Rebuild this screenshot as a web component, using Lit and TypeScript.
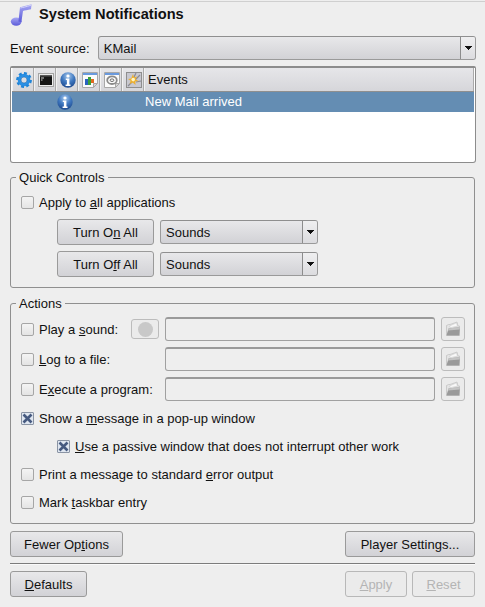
import { LitElement, html, css, svg } from "lit";
import { customElement } from "lit/decorators.js";

const arrow = html`<svg class="arrow" width="7" height="4" viewBox="0 0 7 4"><path d="M0 0h7v1h-1v1h-1v1h-1v1h-1v-1h-1v-1h-1v-1h-1z" fill="#111"/></svg>`;

const infoIcon = (s: number) => html`<svg width=${s} height=${s} viewBox="0 0 16 16">
  <defs><radialGradient id="ig" cx="50%" cy="25%" r="80%"><stop offset="0" stop-color="#a8c8ec"/><stop offset=".5" stop-color="#3f78c0"/><stop offset="1" stop-color="#1a4488"/></radialGradient></defs>
  <circle cx="8" cy="8" r="7.7" fill="url(#ig)"/>
  <circle cx="8" cy="4" r="1.6" fill="#fff"/>
  <path d="M5.8 6.6h3.6v6h1.1V14H5.6v-1.4h1.3V8H5.8z" fill="#fff"/>
</svg>`;

const gear = html`<svg width="16" height="16" viewBox="0 0 16 16">
  <circle cx="8" cy="8" r="4.6" fill="none" stroke="#2a8fe4" stroke-width="3.4"/>
  <circle cx="8" cy="8" r="6.8" fill="none" stroke="#1f84d8" stroke-width="2.2" stroke-dasharray="3 2.3"/>
  <circle cx="8" cy="8" r="3" fill="#dcdde2" stroke="#1468b4" stroke-width=".6"/>
</svg>`;

const terminal = html`<svg width="16" height="16" viewBox="0 0 16 16">
  <rect x=".5" y="1.5" width="15" height="13" fill="#ececec" stroke="#a4a4a4"/>
  <rect x="2" y="3" width="12" height="10" fill="#151515"/>
  <rect x="2" y="3" width="12" height="1.5" fill="#5a5a5a"/>
  <path d="M3 6h3M3 8h1.5" stroke="#d0d0d0" stroke-width="1"/>
</svg>`;

const docBase = svg`
  <path d="M.5.5h15v11l-4 4H.5z" fill="#fbfbfb" stroke="#a8a8a8"/>
  <rect x="1" y="1" width="14" height="2" fill="#6a9ade"/>
  <path d="M11.5 15.5v-4h4z" fill="#d4d4d4" stroke="#a8a8a8"/>`;

const chartDoc = html`<svg width="16" height="16" viewBox="0 0 16 16">
  ${docBase}
  <rect x="3" y="7" width="3" height="6" fill="#2a62c0"/>
  <rect x="6" y="5" width="3" height="8" fill="#3aa03a"/>
  <rect x="9" y="7" width="3" height="4" fill="#e06a20"/>
</svg>`;

const discDoc = html`<svg width="16" height="16" viewBox="0 0 16 16">
  ${docBase}
  <ellipse cx="8" cy="8.2" rx="4.8" ry="3.8" fill="none" stroke="#8a8a8a" stroke-width="1.8"/>
  <ellipse cx="8" cy="8.2" rx="1.9" ry="1.3" fill="none" stroke="#6e6e6e" stroke-width="1"/>
</svg>`;

const spark = html`<svg width="16" height="16" viewBox="0 0 16 16">
  <rect x=".5" y=".5" width="15" height="15" fill="#c8c8d0" stroke="#8e8e8e"/>
  <path d="M10 1l-3 6M14 3L9 8M15 9l-5 1M2 14l5-5" stroke="#8a8a94" stroke-width="1.2"/>
  <path d="M7 2l1 3.4 3-1-1.4 3 3 1.6-3.4.6.4 3.4-3-2.4-3 1.4 1-3.2-2.6-1.8 3.2-.4z" fill="#eeb02e"/>
  <circle cx="7.2" cy="7.6" r="1.8" fill="#fff6c4"/>
</svg>`;

const note = html`<svg width="22" height="23" viewBox="0 0 22 23">
  <defs><linearGradient id="ng" x1="0" y1="0" x2="0" y2="1"><stop offset="0" stop-color="#a8a8f4"/><stop offset="1" stop-color="#5a5ad8"/></linearGradient></defs>
  <ellipse cx="6.2" cy="17.6" rx="5.4" ry="4.2" fill="url(#ng)"/>
  <path d="M8.4 17.5L10 3.2c2.6-.6 6.2-1.4 11.6-3L21 5.2c-3.6.6-6.4 1.2-8 1.7L11.4 18z" fill="url(#ng)"/>
  <path d="M10.4 4c2.6-.6 6-1.3 10.6-2.8" stroke="#d4d4fa" fill="none"/>
</svg>`;

const folder = html`<svg width="16" height="16" viewBox="0 0 16 16">
  <path d="M1.5 14.5V4.5l2-1h1.5l7-2.5 1 4h1.5v9.5z" fill="#e4e4e4" stroke="#b8b8b8" stroke-width=".6"/>
  <path d="M4.5 5l7-3.2 1 3.4-7 1.4z" fill="#f8f8f8" stroke="#c4c4c4" stroke-width=".5"/>
  <path d="M1.5 14.5l2-7 11.5-1.5-.8 8.5z" fill="#9a9a9a"/>
  <path d="M3.5 7.5L15 6l-.3 2.4-11.8 1.2z" fill="#c4c4c4"/>
</svg>`;

@customElement("app-root")
export class AppRoot extends LitElement {
  static styles = css`
    :host {
      display: block;
      width: 485px;
      height: 607px;
      overflow: hidden;
      background: #eeeeee;
      color: #111;
      font-family: "Liberation Sans", Arial, sans-serif;
      font-size: 13px;
      letter-spacing: 0.02px;
      box-sizing: border-box;
    }
    * { box-sizing: border-box; }
    u { text-underline-offset: 1px; }
    .page { display: flex; flex-direction: column; padding: 1px 10px 0; }
    .topline { height: 1px; background: #cfcfcf; margin: 0 -10px; }
    .title { display: flex; align-items: center; gap: 7px; height: 24px; margin-top: 1px; font-size: 14.6px; font-weight: bold; }
    .title span { margin-top: -3px; }
    .source { display: flex; align-items: center; margin-top: 9px; gap: 8px; }
    .source .combo { flex: 1; margin-right: -1px; height: 24px; }
    .combo {
      display: flex; align-items: stretch;
      border: 1px solid #9a9a9a; border-top-color: #8f8f8f; border-radius: 3px;
      background: linear-gradient(#e8e8ea, #d2d2d6);
    }
    .combo .val { flex: 1; padding-left: 5px; display: flex; align-items: center; }
    .combo .drop { width: 15px; border-left: 1px solid #8c8c8c; display: flex; align-items: center; justify-content: center; background: linear-gradient(#efeff0, #dcdcdf); border-radius: 0 2px 2px 0; }
    .tree {
      margin-top: 6px; height: 97px; width: 466px;
      border: 1px solid #8c8c8c; border-top: 2px solid #8c8c8c; border-radius: 2px 2px 3px 3px;
      background: #fff; padding: 0 1px;
    }
    .thead { display: flex; height: 24px; background: linear-gradient(#e6e6e9, #d6d6da); border-bottom: 1px solid #8f8f8f; }
    .th { width: 22px; border-right: 1px solid #aaa; border-left: 1px solid #f2f2f2; padding-left: 1px; display: flex; align-items: center; justify-content: center; }
    .th.ev { flex: 1; justify-content: flex-start; padding-left: 3px; }
    .trow { display: flex; align-items: center; height: 20px; background: #648db3; color: #fff; }
    .trow .ic { width: 16px; height: 16px; margin-left: 45px; }
    .trow .name { margin-left: 72px; margin-top: -1px; }
    fieldset {
      margin: 0; min-width: 0; border: 1px solid #8f8f8f; border-radius: 3px;
      padding: 0 9px 0 10px;
    }
    legend { margin-left: -5px; padding: 0 3px; line-height: 15px; }
    .quick { margin-top: 7px; height: 118px; width: 465px; }
    .chk { display: flex; align-items: center; gap: 5px; }
    .box {
      width: 13px; height: 13px; flex: none; border: 1px solid #a6a6a6; border-radius: 2px;
      background: linear-gradient(#f4f4f4, #e4e4e4); display: flex; align-items: center; justify-content: center;
    }
    .box.on { border-radius: 1px; background: #dfe6f0; border-color: #8a94a4; }
    .quick .all { height: 19px; margin-top: 8px; }
    .turn { display: flex; align-items: center; gap: 6px; margin-left: 36px; height: 26px; margin-top: 6px; }
    .turn.first { margin-top: 7px; }
    .turn .combo { width: 158px; height: 24px; }
    button {
      font: inherit; letter-spacing: inherit; color: inherit; height: 26px; padding: 0;
      border: 1px solid #9a9a9a; border-radius: 3px;
      background: linear-gradient(#e8e8ea, #d2d2d6);
    }
    .turn button { width: 97px; }
    .actions { margin-top: 8px; height: 228px; width: 465px; }
    .rows { display: flex; flex-direction: column; }
    .r { display: flex; align-items: center; height: 24px; }
    .r + .r { margin-top: 6px; }
    .r .chk { width: 144px; flex: none; }
    .r.first { margin-top: 6px; }
    .tone { width: 28px; height: 20px; margin-left: -34px; margin-right: 6px; border: 1px solid #bcbcbc; border-radius: 3px; background: #ebebeb; display: flex; align-items: center; justify-content: center; }
    .tone i { display: block; width: 15px; height: 15px; border-radius: 50%; background: #c8c8c8; }
    .field { width: 270px; height: 24px; border: 1px solid #a0a0a0; border-top: 2px solid #9a9a9a; border-radius: 3px; background: #eeeeee; }
    .pick { width: 24px; height: 24px; margin-left: 6px; border: 1px solid #bcbcbc; border-radius: 3px; background: #ebebeb; display: flex; align-items: center; justify-content: center; }
    .opt { height: 28px; display: flex; align-items: center; }
    .opts { margin-top: 3px; }
    .indent { margin-left: 36px; }
    .line1 { display: flex; justify-content: space-between; margin-top: 7px; }
    .line1 button:first-child { width: 113px; }
    .line1 button:last-child { width: 130px; }
    .sep { height: 1px; background: #7c7c7c; margin-top: 6px; width: 465px; box-shadow: 0 1px 0 #fafafa; }
    .line2 { display: flex; margin-top: 7px; width: 465px; }
    .line2 .def { width: 77px; }
    .line2 .dis { color: #b4b4b4; border-color: #b8b8b8; background: #ebebeb; }
    .line2 .apply { width: 62px; margin-left: auto; }
    .line2 .reset { width: 63px; margin-left: 5px; }
  `;

  private xmark = svg`<svg width="11" height="11" viewBox="0 0 11 11"><path d="M1.5 1.5l8 8M9.5 1.5l-8 8" stroke="#465a80" stroke-width="2.6"/></svg>`;

  private box(on = false) {
    return html`<span class="box ${on ? "on" : ""}">${on ? this.xmark : ""}</span>`;
  }

  render() {
    return html`
      <div class="page">
        <div class="topline"></div>
        <div class="title">${note}<span>System Notifications</span></div>
        <div class="source">
          <span>Event source:</span>
          <div class="combo"><span class="val">KMail</span><span class="drop">${arrow}</span></div>
        </div>
        <div class="tree">
          <div class="thead">
            <div class="th">${gear}</div>
            <div class="th">${terminal}</div>
            <div class="th">${infoIcon(16)}</div>
            <div class="th">${chartDoc}</div>
            <div class="th">${discDoc}</div>
            <div class="th">${spark}</div>
            <div class="th ev">Events</div>
          </div>
          <div class="trow"><span class="ic">${infoIcon(16)}</span><span class="name">New Mail arrived</span></div>
        </div>
        <fieldset class="quick">
          <legend>Quick Controls</legend>
          <div class="chk all">${this.box()}<span>Apply to <u>a</u>ll applications</span></div>
          <div class="turn first"><button>Turn O<u>n</u> All</button>
            <div class="combo"><span class="val">Sounds</span><span class="drop">${arrow}</span></div></div>
          <div class="turn"><button>Turn O<u>f</u>f All</button>
            <div class="combo"><span class="val">Sounds</span><span class="drop">${arrow}</span></div></div>
        </fieldset>
        <fieldset class="actions">
          <legend>Actions</legend>
          <div class="rows">
            <div class="r first"><div class="chk">${this.box()}<span>Play a <u>s</u>ound:</span></div>
              <span class="tone"><i></i></span><div class="field"></div><div class="pick">${folder}</div></div>
            <div class="r"><div class="chk">${this.box()}<span><u>L</u>og to a file:</span></div>
              <div class="field"></div><div class="pick">${folder}</div></div>
            <div class="r"><div class="chk">${this.box()}<span>E<u>x</u>ecute a program:</span></div>
              <div class="field"></div><div class="pick">${folder}</div></div>
          </div>
          <div class="opts">
            <div class="opt chk">${this.box(true)}<span>Show a <u>m</u>essage in a pop-up window</span></div>
            <div class="opt chk indent">${this.box(true)}<span><u>U</u>se a passive window that does not interrupt other work</span></div>
            <div class="opt chk">${this.box()}<span>Print a message to standard <u>e</u>rror output</span></div>
            <div class="opt chk">${this.box()}<span>Mark <u>t</u>askbar entry</span></div>
          </div>
        </fieldset>
        <div class="line1"><button>Fewer Op<u>t</u>ions</button><button>Player Settings...</button></div>
        <div class="sep"></div>
        <div class="line2">
          <button class="def"><u>D</u>efaults</button>
          <button class="apply dis"><u>A</u>pply</button>
          <button class="reset dis"><u>R</u>eset</button>
        </div>
      </div>
    `;
  }
}
